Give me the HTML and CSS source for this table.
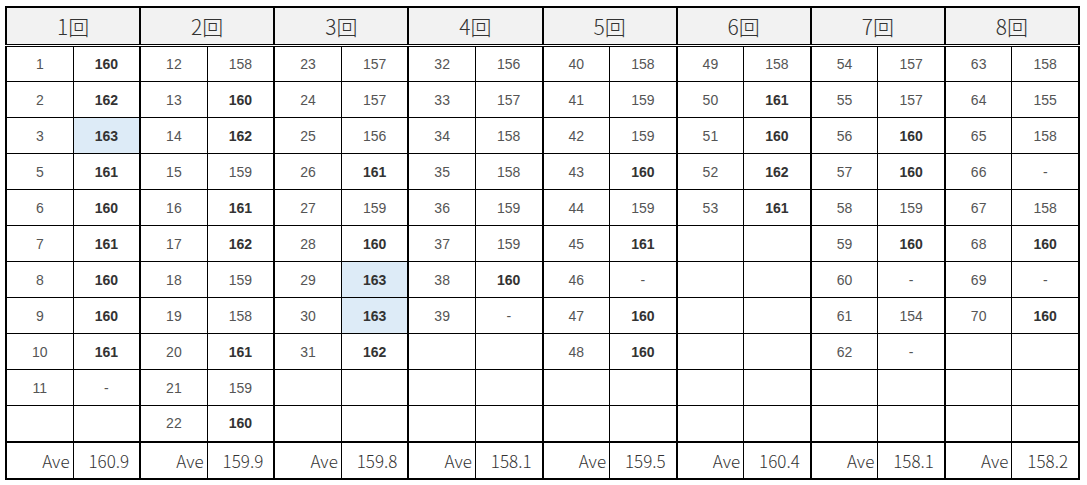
FILE: index.html
```html
<!DOCTYPE html>
<html lang="ja">
<head>
<meta charset="utf-8">
<link rel="stylesheet" href="styles.css">
</head>
<body>
<table class="grid">
<colgroup>
<col class="c"><col class="c"><col class="c"><col class="c"><col class="c"><col class="c"><col class="c"><col class="c">
<col class="c"><col class="c"><col class="c"><col class="c"><col class="c"><col class="c"><col class="c"><col class="c">
</colgroup>
<thead>
<tr class="head">
<th colspan="2">1回</th><th colspan="2">2回</th><th colspan="2">3回</th><th colspan="2">4回</th>
<th colspan="2">5回</th><th colspan="2">6回</th><th colspan="2">7回</th><th colspan="2">8回</th>
</tr>
</thead>
<tbody>
<tr>
<td class="n">1</td><td class="v b">160</td><td class="n">12</td><td class="v">158</td><td class="n">23</td><td class="v">157</td><td class="n">32</td><td class="v">156</td>
<td class="n">40</td><td class="v">158</td><td class="n">49</td><td class="v">158</td><td class="n">54</td><td class="v">157</td><td class="n">63</td><td class="v">158</td>
</tr>
<tr>
<td class="n">2</td><td class="v b">162</td><td class="n">13</td><td class="v b">160</td><td class="n">24</td><td class="v">157</td><td class="n">33</td><td class="v">157</td>
<td class="n">41</td><td class="v">159</td><td class="n">50</td><td class="v b">161</td><td class="n">55</td><td class="v">157</td><td class="n">64</td><td class="v">155</td>
</tr>
<tr>
<td class="n">3</td><td class="v b hl">163</td><td class="n">14</td><td class="v b">162</td><td class="n">25</td><td class="v">156</td><td class="n">34</td><td class="v">158</td>
<td class="n">42</td><td class="v">159</td><td class="n">51</td><td class="v b">160</td><td class="n">56</td><td class="v b">160</td><td class="n">65</td><td class="v">158</td>
</tr>
<tr>
<td class="n">5</td><td class="v b">161</td><td class="n">15</td><td class="v">159</td><td class="n">26</td><td class="v b">161</td><td class="n">35</td><td class="v">158</td>
<td class="n">43</td><td class="v b">160</td><td class="n">52</td><td class="v b">162</td><td class="n">57</td><td class="v b">160</td><td class="n">66</td><td class="v">-</td>
</tr>
<tr>
<td class="n">6</td><td class="v b">160</td><td class="n">16</td><td class="v b">161</td><td class="n">27</td><td class="v">159</td><td class="n">36</td><td class="v">159</td>
<td class="n">44</td><td class="v">159</td><td class="n">53</td><td class="v b">161</td><td class="n">58</td><td class="v">159</td><td class="n">67</td><td class="v">158</td>
</tr>
<tr>
<td class="n">7</td><td class="v b">161</td><td class="n">17</td><td class="v b">162</td><td class="n">28</td><td class="v b">160</td><td class="n">37</td><td class="v">159</td>
<td class="n">45</td><td class="v b">161</td><td class="n"></td><td class="v"></td><td class="n">59</td><td class="v b">160</td><td class="n">68</td><td class="v b">160</td>
</tr>
<tr>
<td class="n">8</td><td class="v b">160</td><td class="n">18</td><td class="v">159</td><td class="n">29</td><td class="v b hl">163</td><td class="n">38</td><td class="v b">160</td>
<td class="n">46</td><td class="v">-</td><td class="n"></td><td class="v"></td><td class="n">60</td><td class="v">-</td><td class="n">69</td><td class="v">-</td>
</tr>
<tr>
<td class="n">9</td><td class="v b">160</td><td class="n">19</td><td class="v">158</td><td class="n">30</td><td class="v b hl">163</td><td class="n">39</td><td class="v">-</td>
<td class="n">47</td><td class="v b">160</td><td class="n"></td><td class="v"></td><td class="n">61</td><td class="v">154</td><td class="n">70</td><td class="v b">160</td>
</tr>
<tr>
<td class="n">10</td><td class="v b">161</td><td class="n">20</td><td class="v b">161</td><td class="n">31</td><td class="v b">162</td><td class="n"></td><td class="v"></td>
<td class="n">48</td><td class="v b">160</td><td class="n"></td><td class="v"></td><td class="n">62</td><td class="v">-</td><td class="n"></td><td class="v"></td>
</tr>
<tr>
<td class="n">11</td><td class="v">-</td><td class="n">21</td><td class="v">159</td><td class="n"></td><td class="v"></td><td class="n"></td><td class="v"></td>
<td class="n"></td><td class="v"></td><td class="n"></td><td class="v"></td><td class="n"></td><td class="v"></td><td class="n"></td><td class="v"></td>
</tr>
<tr>
<td class="n"></td><td class="v"></td><td class="n">22</td><td class="v b">160</td><td class="n"></td><td class="v"></td><td class="n"></td><td class="v"></td>
<td class="n"></td><td class="v"></td><td class="n"></td><td class="v"></td><td class="n"></td><td class="v"></td><td class="n"></td><td class="v"></td>
</tr>
</tbody>
<tfoot>
<tr class="ave">
<td class="n">Ave</td><td class="v">160.9</td><td class="n">Ave</td><td class="v">159.9</td><td class="n">Ave</td><td class="v">159.8</td><td class="n">Ave</td><td class="v">158.1</td>
<td class="n">Ave</td><td class="v">159.5</td><td class="n">Ave</td><td class="v">160.4</td><td class="n">Ave</td><td class="v">158.1</td><td class="n">Ave</td><td class="v">158.2</td>
</tr>
</tfoot>
</table>
</body>
</html>
```
FILE: styles.css
```css
html, body {
  margin: 0;
  padding: 0;
  background: #ffffff;
}
body {
  padding: 6px 0 0 5px;
}
.grid {
  border-collapse: collapse;
  table-layout: fixed;
  width: 1075px;
  border: 2px solid #000;
  font-family: "Liberation Sans", Arial, sans-serif;
  font-size: 14px;
  color: #555;
}
.grid col.c {
  width: 67px;
}
.grid th, .grid td {
  padding: 0;
  border: 1px solid #000;
  text-align: center;
  overflow: hidden;
  white-space: nowrap;
}
.grid td.v {
  border-right: 2px solid #000;
}
.grid td.n {
  border-left: 2px solid #000;
}
.head th {
  height: 36px;
  background: #f2f2f2;
  border: 2px solid #000;
  border-bottom: 3px double #000;
  font-family: "Noto Sans CJK JP", sans-serif;
  font-weight: 300;
  font-size: 21px;
  color: #333;
}
tbody tr {
  height: 36px;
}
tbody td {
  padding-top: 2px;
}
.grid td.b {
  font-weight: bold;
  color: #333;
}
.grid td.hl {
  background: #ddebf7;
}
.ave td {
  height: 35px;
  border-top: 2px solid #000;
  font-family: "Noto Sans CJK JP", sans-serif;
  font-weight: 300;
  font-size: 17px;
  color: #333;
}
.ave td.n {
  text-align: right;
  padding-right: 3px;
}
.ave td.v {
  text-align: right;
  padding-right: 10px;
}
```
